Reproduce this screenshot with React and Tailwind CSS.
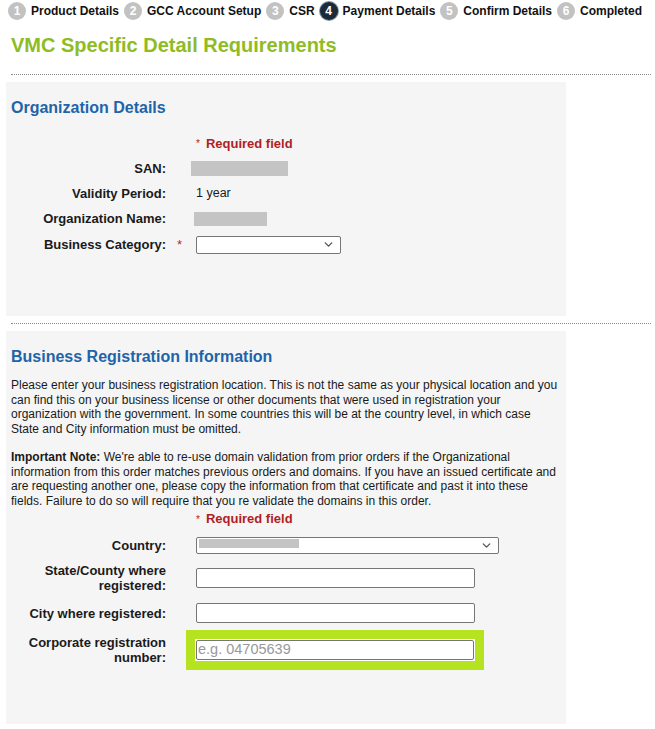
import React from 'react';
import { ChevronDown } from 'lucide-react';

const sans = "font-['Liberation_Sans',Arial,sans-serif]";

const steps = [
  { n: 1, label: 'Product Details' },
  { n: 2, label: 'GCC Account Setup' },
  { n: 3, label: 'CSR' },
  { n: 4, label: 'Payment Details' },
  { n: 5, label: 'Confirm Details' },
  { n: 6, label: 'Completed' },
];

const Row = ({ label, req, className, children }) => (
  <div className={`flex items-center ${className}`}>
    <div className="w-[160px] shrink-0 text-right font-bold text-[#1a1a1a] text-[13px] leading-[15px]">{label}</div>
    <div className="w-[30px] shrink-0 pl-[11px] text-[#c0272d] text-[13px]">{req ? '*' : ''}</div>
    <div className="flex-1">{children}</div>
  </div>
);

const Required = ({ className }) => (
  <div className={`flex items-center ${className}`}>
    <div className="w-[190px] shrink-0" />
    <span className="text-[#b01e23] text-[10px] mr-[6px]">*</span>
    <span className="text-[#b01e23] font-bold text-[13px]">Required field</span>
  </div>
);

const Select = ({ className, children }) => (
  <div className={`flex items-center justify-between bg-white border border-[#767676] rounded-[2px] ${className}`}>
    <div className="flex-1 h-full flex items-center">{children}</div>
    <ChevronDown size={13} strokeWidth={2.5} className="text-[#555] mr-[5px]" />
  </div>
);

export default function App() {
  return (
    <div className={`w-[655px] h-[729px] bg-white overflow-hidden text-[12px] text-[#1a1a1a] ${sans}`}>
      {/* Steps */}
      <div className="flex items-center h-[22px] pl-[8px] whitespace-nowrap">
        {steps.map((s) => (
          <div key={s.n} className="flex items-center gap-[5px] mr-[5px] shrink-0">
            <div
              className={`w-[18px] h-[18px] rounded-full flex items-center justify-center text-white text-[12px] font-bold ${
                s.n === 4 ? 'bg-[#1c2a38] ring-1 ring-[#7e98ad]' : 'bg-[#c2c2c2]'
              }`}
            >
              {s.n}
            </div>
            <span className="font-bold text-[12px] text-[#111]">{s.label}</span>
          </div>
        ))}
      </div>

      {/* Title */}
      <h1 className="mt-[11px] ml-[11px] h-[24px] leading-[24px] text-[20px] font-bold text-[#8fbc24]">
        VMC Specific Detail Requirements
      </h1>

      <div className="mt-[17px] ml-[11px] w-[640px] border-t border-dotted border-[#8a8a8a]" />

      {/* Organization Details */}
      <div className="mt-[7px] ml-[6px] w-[560px] h-[234px] bg-[#f5f5f5] pt-[17px]">
        <h2 className="ml-[5px] h-[18px] leading-[18px] text-[16px] font-bold text-[#1e64a8]">
          Organization Details
        </h2>
        <Required className="mt-[14px] h-[25px]" />
        <Row label="SAN:" className="h-[25px]">
          <div className="-ml-[5px] w-[97px] h-[15px] bg-[#c4c4c4]" />
        </Row>
        <Row label="Validity Period:" className="h-[25px]">
          <span className="text-[12.5px]">1 year</span>
        </Row>
        <Row label="Organization Name:" className="h-[25px]">
          <div className="-ml-[2px] w-[73px] h-[14px] bg-[#c4c4c4]" />
        </Row>
        <Row label="Business Category:" req className="h-[27px]">
          <Select className="w-[145px] h-[18px]" />
        </Row>
      </div>

      <div className="mt-[7px] ml-[11px] w-[640px] border-t border-dotted border-[#8a8a8a]" />

      {/* Business Registration */}
      <div className="mt-[7px] ml-[6px] w-[560px] h-[393px] bg-[#f5f5f5] pt-[17px]">
        <h2 className="ml-[5px] h-[18px] leading-[18px] text-[16px] font-bold text-[#1e64a8]">
          Business Registration Information
        </h2>
        <p className="mt-[12px] ml-[5px] w-[549px] leading-[14.5px]">
          Please enter your business registration location. This is not the same as your physical location and you can find this on your business license or other documents that were used in registration your organization with the government. In some countries this will be at the country level, in which case State and City information must be omitted.
        </p>
        <p className="mt-[14px] ml-[5px] w-[549px] leading-[14.5px]">
          <b>Important Note:</b> We're able to re-use domain validation from prior orders if the Organizational information from this order matches previous orders and domains. If you have an issued certificate and are requesting another one, please copy the information from that certificate and past it into these fields. Failure to do so will require that you re validate the domains in this order.
        </p>
        <Required className="h-[22px]" />
        <Row label="Country:" className="h-[30px]">
          <Select className="w-[303px] h-[17px]">
            <div className="ml-[2px] -mt-[4px] w-[100px] h-[9px] bg-[#c4c4c4]" />
          </Select>
        </Row>
        <Row label={<>State/County where<br />registered:</>} className="h-[36px]">
          <div className="w-[279px] h-[20px] bg-white border border-[#767676] rounded-[2px]" />
        </Row>
        <Row label="City where registered:" className="h-[34px]">
          <div className="w-[279px] h-[20px] bg-white border border-[#767676] rounded-[2px]" />
        </Row>
        <Row label={<>Corporate registration<br />number:</>} className="h-[40px]">
          <div className="-ml-[10px] w-[298px] h-[40px] bg-[#b5e31f] p-[9px]">
            <div className="w-full h-full bg-white p-[1px]">
              <div className="w-full h-full border border-[#767676] rounded-[2px] bg-white flex items-center px-[1px] text-[14.5px] text-[#999]">
                e.g. 04705639
              </div>
            </div>
          </div>
        </Row>
      </div>
    </div>
  );
}
